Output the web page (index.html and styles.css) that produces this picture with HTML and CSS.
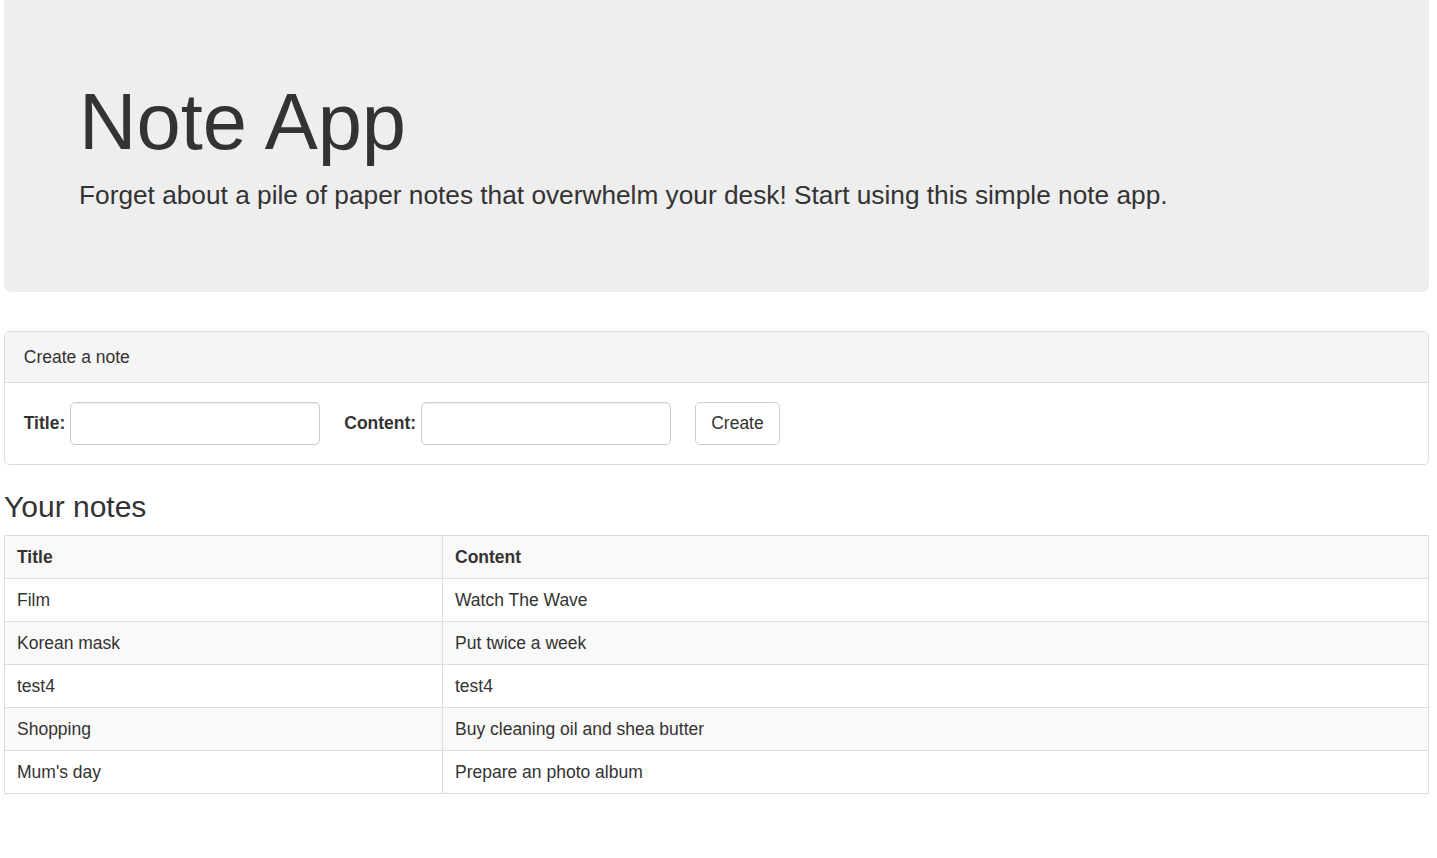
FILE: index.html
```html
<!DOCTYPE html>
<html lang="en">
<head>
<meta charset="utf-8">
<title>Note App</title>
<link rel="stylesheet" href="styles.css">
</head>
<body>
<div class="page">
  <header class="jumbotron">
    <h1 class="jumbo-title">Note App</h1>
    <p class="jumbo-lead">Forget about a pile of paper notes that overwhelm your desk! Start using this simple note app.</p>
  </header>

  <section class="panel">
    <div class="panel-heading">Create a note</div>
    <div class="panel-body">
      <form class="note-form">
        <div class="form-group">
          <label class="form-label" for="title">Title:</label>
          <input class="form-input" id="title" type="text">
        </div>
        <div class="form-group">
          <label class="form-label" for="content">Content:</label>
          <input class="form-input" id="content" type="text">
        </div>
        <button class="btn" type="button">Create</button>
      </form>
    </div>
  </section>

  <h3 class="section-title">Your notes</h3>
  <table class="notes-table">
    <colgroup>
      <col class="col-title">
      <col>
    </colgroup>
    <tbody>
      <tr><th>Title</th><th>Content</th></tr>
      <tr><td>Film</td><td>Watch The Wave</td></tr>
      <tr><td>Korean mask</td><td>Put twice a week</td></tr>
      <tr><td>test4</td><td>test4</td></tr>
      <tr><td>Shopping</td><td>Buy cleaning oil and shea butter</td></tr>
      <tr><td>Mum's day</td><td>Prepare an photo album</td></tr>
    </tbody>
  </table>
</div>
</body>
</html>
```

FILE: styles.css
```css
html, body {
  margin: 0;
  padding: 0;
  background: #fff;
}

body {
  font-family: "Liberation Sans", Arial, Helvetica, sans-serif;
  font-size: 17.5px;
  line-height: 25px;
  color: #333;
}

.page {
  padding: 0 8px 40px 4px;
}

.jumbotron {
  background: #eee;
  border-radius: 0 0 7px 7px;
  padding: 79px 75px 78px 75px;
  margin-bottom: 39px;
}

.jumbo-title {
  margin: 0 0 11px 0;
  font-size: 79.5px;
  line-height: 86.6px;
  font-weight: 500;
  color: #333;
}

.jumbo-lead {
  margin: 0;
  font-size: 26.25px;
  line-height: 37.5px;
  font-weight: 200;
}

.panel {
  border: 1px solid #ddd;
  border-radius: 5px;
  margin-bottom: 25px;
  overflow: hidden;
}

.panel-heading {
  background: #f5f5f5;
  border-bottom: 1px solid #ddd;
  padding: 12.5px 18.75px;
  line-height: 25px;
}

.panel-body {
  padding: 19px 18.75px 19px 18.75px;
}

.note-form {
  display: flex;
  align-items: center;
  gap: 24px;
}

.form-group {
  display: flex;
  align-items: center;
  gap: 5px;
}

.form-label {
  font-weight: 700;
}

.form-input {
  box-sizing: border-box;
  width: 250px;
  height: 43px;
  border: 1px solid #ccc;
  border-radius: 5px;
  box-shadow: inset 0 1px 1px rgba(0, 0, 0, 0.075);
  padding: 7px 15px;
  font: inherit;
  color: #555;
  background: #fff;
}

.btn {
  box-sizing: border-box;
  height: 43px;
  padding: 0 15px;
  border: 1px solid #ccc;
  border-radius: 5px;
  background: #fff;
  color: #333;
  font: inherit;
}

.section-title {
  margin: 0 0 12px 0;
  font-size: 30px;
  line-height: 33px;
  font-weight: 500;
}

.notes-table {
  width: 100%;
  border-collapse: collapse;
  border: 1px solid #ddd;
}

.col-title {
  width: 438px;
}

.notes-table th,
.notes-table td {
  border: 1px solid #ddd;
  padding: 8.5px 12px;
  line-height: 25px;
  text-align: left;
  vertical-align: top;
}

.notes-table th {
  font-weight: 700;
}

.notes-table tr:nth-child(odd) {
  background: #f9f9f9;
}
```
